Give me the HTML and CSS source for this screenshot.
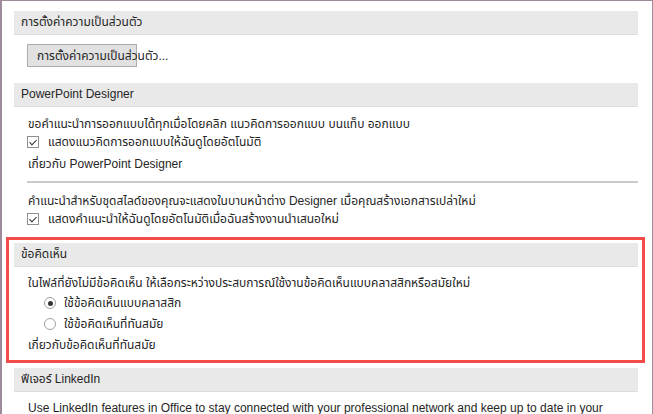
FILE: index.html
```html
<!DOCTYPE html>
<html lang="th">
<head>
    <meta charset="UTF-8">
    <title>ตัวเลือก PowerPoint</title>
    <link rel="stylesheet" href="styles.css">
</head>
<body>
    <div class="frame">
        <div class="content">
            <div class="section-head">การตั้งค่าความเป็นส่วนตัว</div>
            <div class="btn-row">
                <button class="btn">การตั้งค่าความเป็นส่วนตัว...</button>
            </div>

            <div class="section-head head-gap">PowerPoint Designer</div>
            <div class="body">
                <div class="line first">ขอคำแนะนำการออกแบบได้ทุกเมื่อโดยคลิก แนวคิดการออกแบบ บนแท็บ ออกแบบ</div>
                <label class="line check-row">
                    <span class="check checked"></span>
                    แสดงแนวคิดการออกแบบให้ฉันดูโดยอัตโนมัติ
                </label>
                <div class="line about">เกี่ยวกับ PowerPoint Designer</div>
                <div class="separator"></div>
                <div class="line after-sep">คำแนะนำสำหรับชุดสไลด์ของคุณจะแสดงในบานหน้าต่าง Designer เมื่อคุณสร้างเอกสารเปล่าใหม่</div>
                <label class="line check-row">
                    <span class="check checked"></span>
                    แสดงคำแนะนำให้ฉันดูโดยอัตโนมัติเมื่อฉันสร้างงานนำเสนอใหม่
                </label>
            </div>

            <div class="highlight">
                <div class="section-head">ข้อคิดเห็น</div>
                <div class="body">
                    <div class="line first-sm">ในไฟล์ที่ยังไม่มีข้อคิดเห็น ให้เลือกระหว่างประสบการณ์ใช้งานข้อคิดเห็นแบบคลาสสิกหรือสมัยใหม่</div>
                    <label class="line radio-row r1">
                        <span class="radio selected"></span>
                        ใช้ข้อคิดเห็นแบบคลาสสิก
                    </label>
                    <label class="line radio-row">
                        <span class="radio"></span>
                        ใช้ข้อคิดเห็นที่ทันสมัย
                    </label>
                    <div class="line about-sm">เกี่ยวกับข้อคิดเห็นที่ทันสมัย</div>
                </div>
            </div>

            <div class="section-head linkedin">ฟีเจอร์ LinkedIn</div>
            <div class="body">
                <div class="line first-sm">Use LinkedIn features in Office to stay connected with your professional network and keep up to date in your</div>
            </div>
        </div>
    </div>
</body>
</html>
```

FILE: styles.css
```css
html, body {
    margin: 0;
    padding: 0;
    background: white;
}
body {
    font-family: "Segoe UI", "Liberation Sans", "Noto Sans Thai", "Noto Sans", Tahoma, sans-serif;
    font-size: 12px;
    color: #262626;
}
.frame {
    height: 413px;
    border-top: 1px solid #9d8a9a;
    border-left: 2px solid #9d8a9a;
    border-right: 1px solid #9d8a9a;
    overflow: hidden;
}
.content {
    padding: 10px 14px 0 12px;
}
.section-head {
    height: 23px;
    line-height: 23px;
    padding-left: 7px;
    background: #e9e9e9;
    border-bottom: 1px solid #dcdcdc;
    white-space: nowrap;
}
.head-gap {
    margin-top: 16px;
}
.btn-row {
    margin-top: 9px;
    padding-left: 13px;
    height: 23px;
}
.btn {
    width: 110px;
    height: 23px;
    padding: 0 0 0 9px;
    margin: 0;
    background: #e1e1e1;
    border: 1px solid #adadad;
    font: inherit;
    color: #262626;
    text-align: left;
    white-space: nowrap;
    overflow: visible;
}
.body {
    padding-left: 14px;
}
.line {
    display: flex;
    align-items: center;
    height: 18px;
    white-space: nowrap;
}
.first { margin-top: 8px; }
.about { margin-top: 4px; }
.separator {
    height: 2px;
    background: #c9c9c9;
    margin: 8px 0 0 -1px;
}
.after-sep { margin-top: 9px; }

.check-row {
    margin-left: -1px;
}
.check {
    box-sizing: border-box;
    width: 12px;
    height: 12px;
    border: 1px solid #8f8f8f;
    background: white;
    margin-right: 9px;
    position: relative;
}
.check.checked::after {
    content: "";
    position: absolute;
    left: 3px;
    top: 1px;
    width: 3px;
    height: 6px;
    border-right: 1px solid #333;
    border-bottom: 1px solid #333;
    transform: rotate(45deg);
}

.highlight {
    margin: 9px -7px 0 -8px;
    border: 3px solid #f44b4b;
    padding: 3px 4px 6px 5px;
}
.first-sm { margin-top: 7px; }
.radio-row {
    padding-left: 16px;
    margin-top: 3px;
}
.r1 { margin-top: 2px; }
.radio {
    box-sizing: border-box;
    width: 12px;
    height: 12px;
    border: 1px solid #a0a0a0;
    border-radius: 50%;
    background: white;
    margin-right: 8px;
    position: relative;
}
.radio.selected::after {
    content: "";
    position: absolute;
    left: 2.5px;
    top: 2.5px;
    width: 5px;
    height: 5px;
    border-radius: 50%;
    background: #333;
}
.about-sm { margin-top: 3px; }
.linkedin { margin-top: 5px; }
```
